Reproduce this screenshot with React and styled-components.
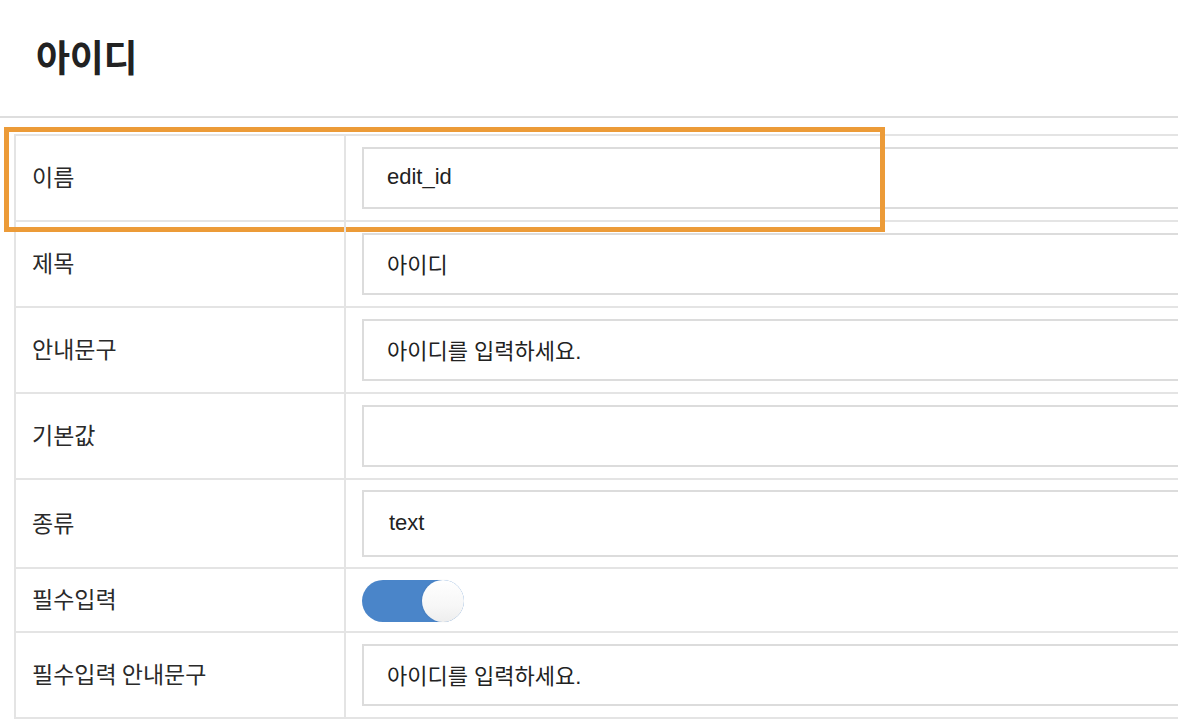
import React from 'react';
import styled, { createGlobalStyle } from 'styled-components';

const GlobalStyle = createGlobalStyle`
  html, body {
    margin: 0;
    padding: 0;
    background: #fff;
    overflow: hidden;
  }
  body {
    font-family: "Liberation Sans", "Noto Sans CJK KR", sans-serif;
    color: #222;
  }
`;

const Page = styled.div`
  width: 1178px;
  height: 724px;
  overflow: hidden;
`;

const Header = styled.header`
  height: 118px;
  box-sizing: border-box;
  border-bottom: 2px solid #dedede;
  display: flex;
  align-items: center;
  padding-left: 36px;
`;

const Title = styled.h1`
  margin: 0;
  font-family: "Noto Sans CJK KR", sans-serif;
  font-size: 37px;
  font-weight: 700;
  color: #222;
  letter-spacing: -0.3px;
  transform: translateY(-2px);
`;

const Table = styled.div`
  margin: 16px 0 0 14px;
  width: 1400px;
  border-top: 2px solid #e4e4e4;
  border-left: 2px solid #e4e4e4;
`;

const Row = styled.div`
  position: relative;
  display: grid;
  grid-template-columns: 330px 1fr;
  border-bottom: 2px solid #e4e4e4;

  ${({ $highlighted }) => $highlighted && `
    &::after {
      content: '';
      position: absolute;
      left: -12px;
      top: -9px;
      width: 871px;
      height: 95px;
      border: 5px solid #ec9b38;
      pointer-events: none;
    }
  `}
`;

const Label = styled.div`
  display: flex;
  align-items: center;
  padding-left: 16px;
  border-right: 2px solid #e4e4e4;
  font-family: "Noto Sans CJK KR", sans-serif;
  font-size: 23px;
  color: #2a2a2a;

  span {
    transform: translateY(-2px);
  }
`;

const Cell = styled.div`
  display: flex;
  align-items: center;
  padding: ${({ $pad }) => $pad || '11px 16px'};
`;

const Input = styled.div`
  box-sizing: border-box;
  width: 100%;
  height: ${({ $h }) => $h || 62}px;
  border: 2px solid #dcdcdc;
  display: flex;
  align-items: center;
  padding-left: ${({ $pl }) => $pl || 23}px;
  font-family: "Liberation Sans", "Noto Sans CJK KR", sans-serif;
  font-size: 22px;
  color: #222;

  span {
    transform: translateY(-1px);
  }
`;

const Toggle = styled.div`
  position: relative;
  width: 102px;
  height: 42px;
  border-radius: 21px;
  background: #4a85c9;
`;

const Knob = styled.div`
  position: absolute;
  right: 0;
  top: 0;
  width: 42px;
  height: 42px;
  border-radius: 50%;
  background: linear-gradient(180deg, #ffffff 0%, #f7f7f7 60%, #eeeeee 100%);
  box-shadow: -1px 0 2px rgba(0, 0, 0, 0.06);
`;

const rows = [
  { label: '이름', value: 'edit_id', highlighted: true },
  { label: '제목', value: '아이디' },
  { label: '안내문구', value: '아이디를 입력하세요.' },
  { label: '기본값', value: '' },
  { label: '종류', value: 'text', kind: 'select' },
  { label: '필수입력', kind: 'toggle' },
  { label: '필수입력 안내문구', value: '아이디를 입력하세요.' },
];

const App = () => {
  return (
    <Page>
      <GlobalStyle />
      <Header>
        <Title>아이디</Title>
      </Header>
      <Table>
        {rows.map((row) => (
          <Row key={row.label} $highlighted={row.highlighted}>
            <Label><span>{row.label}</span></Label>
            {row.kind === 'toggle' ? (
              <Cell $pad="11px 16px 9px">
                <Toggle>
                  <Knob />
                </Toggle>
              </Cell>
            ) : row.kind === 'select' ? (
              <Cell $pad="10px 16px">
                <Input $h={67} $pl={25}>
                  <span>{row.value}</span>
                </Input>
              </Cell>
            ) : (
              <Cell>
                <Input>
                  <span>{row.value}</span>
                </Input>
              </Cell>
            )}
          </Row>
        ))}
      </Table>
    </Page>
  );
};

export default App;
